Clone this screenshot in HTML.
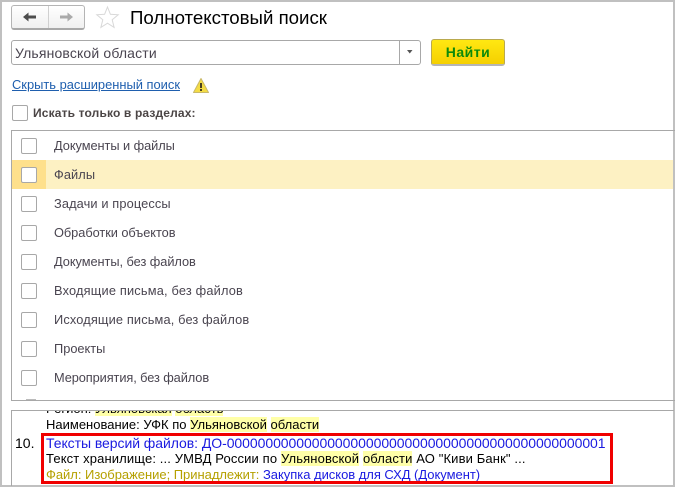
<!DOCTYPE html>
<html lang="ru"><head><meta charset="utf-8"><style>
html,body{margin:0;padding:0;background:#fff}
#p{position:relative;width:675px;height:487px;overflow:hidden;background:#fff;font-family:"Liberation Sans",sans-serif;font-size:12px;color:#4b4545}
#p div,#p span.a,#p svg{position:absolute}
.t{white-space:nowrap;line-height:16px;height:16px}
.cb{width:14px;height:14px;border:1px solid #a8a8a8;border-radius:2px;background:#fff}
.h{background:#ffffa8}
.r{left:54px;color:#4a4550;font-size:12.8px}
.l{color:#000;white-space:nowrap;line-height:16px;height:16px;overflow:visible;font-size:13px}
</style></head><body><div id="p">
<div style="left:0;top:0;width:675px;height:2px;background:#c0c0c0"></div>
<div style="left:0;top:0;width:2px;height:487px;background:#c0c0c0"></div>
<div style="left:673px;top:0;width:2px;height:487px;background:#c0c0c0"></div>
<div style="left:0;top:485px;width:675px;height:2px;background:#c0c0c0"></div>

<div style="left:11px;top:5px;width:72px;height:22px;border:1px solid #b4b4b4;border-bottom:2px solid #a8a8a8;border-radius:3px;background:linear-gradient(#fff,#f0f0f0)"></div>
<div style="left:48px;top:6px;width:1px;height:22px;background:#d0d0d0"></div>
<svg style="left:22px;top:11px" width="16" height="12" viewBox="0 0 16 12"><path d="M1 6 L6.500 1.500 V4.500 H14 V7.500 H6.500 V10.500Z" fill="#4d4d4d"/></svg>
<svg style="left:58px;top:11px" width="16" height="12" viewBox="0 0 16 12"><path d="M15 6 L9.500 1.500 V4.500 H2 V7.500 H9.500 V10.500Z" fill="#aaa"/></svg>
<svg style="left:95px;top:5px" width="25" height="24" viewBox="0 0 25 24"><path d="M12.500 2 L15.400 9.300 L23.200 9.800 L17.200 14.800 L19.100 22.400 L12.500 18.200 L5.900 22.400 L7.800 14.800 L1.800 9.800 L9.600 9.300Z" fill="#fff" stroke="#d8d8d8" stroke-width="1"/></svg>
<div class="t" style="left:130px;top:7px;height:22px;line-height:22px;font-size:18.67px;color:#000">Полнотекстовый поиск</div>

<div style="left:11px;top:40px;width:408px;height:23px;border:1px solid #a8a8a8;border-radius:3px;background:#fff"></div>
<div style="left:399px;top:41px;width:1px;height:23px;background:#a8a8a8"></div>
<svg style="left:406px;top:49px" width="8" height="6" viewBox="0 0 8 6"><path d="M1 1 H6.500 L3.750 4.500Z" fill="#555"/></svg>
<div class="t" style="left:15px;top:45px;font-size:14px;color:#4a4550;letter-spacing:.15px">Ульяновской области</div>

<div style="left:431px;top:39px;width:72px;height:24px;border:1px solid #b9a94e;border-bottom:2px solid #b5b5b5;border-radius:3px;background:linear-gradient(#ffe812,#f5d000)"></div>
<div class="t" style="left:431px;top:44px;width:74px;text-align:center;font-size:14px;font-weight:bold;color:#0b8a0b;letter-spacing:.5px">Найти</div>

<div class="t" style="left:12px;top:77px;font-size:12.9px;color:#1f5fae;text-decoration:underline">Скрыть расширенный поиск</div>
<svg style="left:193px;top:78px" width="16" height="15" viewBox="0 0 16 15"><path d="M8 .5 L15.500 14.500 H.5Z" fill="#f4dc45" stroke="#c9b96a" stroke-width="1" stroke-linejoin="round"/><rect x="7" y="5" width="2" height="5" fill="#4a4020"/><rect x="7" y="11" width="2" height="2" fill="#4a4020"/></svg>

<div class="cb" style="left:12px;top:105px"></div>
<div class="t" style="left:33px;top:105px;font-size:12px;font-weight:bold;color:#4b4545;letter-spacing:.15px">Искать только в разделах:</div>

<div style="left:11px;top:130px;width:664px;height:269px;border-top:1px solid #a8a8a8;border-left:1px solid #a8a8a8;border-bottom:1px solid #a8a8a8;box-sizing:content-box"></div>
<div style="left:12px;top:160px;width:661px;height:29px;background:#fdf1c3"></div>
<div style="left:12px;top:160px;width:34px;height:29px;background:#fee08c"></div>

<div class="cb" style="left:21px;top:138px"></div><div class="t r" style="top:138px;letter-spacing:-.05px">Документы и файлы</div>
<div class="cb" style="left:21px;top:167px"></div><div class="t r" style="top:167px;letter-spacing:.1px">Файлы</div>
<div class="cb" style="left:21px;top:196px"></div><div class="t r" style="top:196px;letter-spacing:.12px">Задачи и процессы</div>
<div class="cb" style="left:21px;top:225px"></div><div class="t r" style="top:225px;letter-spacing:-.05px">Обработки объектов</div>
<div class="cb" style="left:21px;top:254px"></div><div class="t r" style="top:254px;letter-spacing:-.05px">Документы, без файлов</div>
<div class="cb" style="left:21px;top:283px"></div><div class="t r" style="top:283px;letter-spacing:.18px">Входящие письма, без файлов</div>
<div class="cb" style="left:21px;top:312px"></div><div class="t r" style="top:312px;letter-spacing:.14px">Исходящие письма, без файлов</div>
<div class="cb" style="left:21px;top:341px"></div><div class="t r" style="top:341px">Проекты</div>
<div class="cb" style="left:21px;top:370px"></div><div class="t r" style="top:370px;letter-spacing:-.09px">Мероприятия, без файлов</div>
<div style="left:26px;top:399px;width:10px;height:1px;background:#bbb"></div>

<div style="left:11px;top:410px;width:662px;height:75px;border-top:1px solid #a8a8a8;border-left:1px solid #a8a8a8"></div>
<div style="left:12px;top:411px;width:661px;height:74px;overflow:hidden">
<div class="l" style="left:34px;top:-10px;color:#000">Регион: <span class="h">Ульяновская</span> <span class="h">область</span></div>
<div class="l" style="left:34px;top:6px">Наименование: УФК по <span class="h">Ульяновской</span> <span class="h">области</span></div>
<div class="l" style="left:3px;top:24px;font-size:14px">10.</div>
<div class="l" style="left:34px;top:24px;font-size:14px;color:#1a1ae0;letter-spacing:-.055px">Тексты версий файлов: ДО-0000000000000000000000000000000000000000000000001</div>
<div class="l" style="left:34px;top:40px;letter-spacing:.13px">Текст хранилище: ... УМВД России по <span class="h">Ульяновской</span> <span class="h">области</span> АО "Киви Банк" ...</div>
<div class="l" style="left:34px;top:56px;color:#b5a000;letter-spacing:-.03px">Файл: Изображение; Принадлежит: <span style="color:#1a1ae0">Закупка дисков для СХД (Документ)</span></div>
</div>
<div style="left:41px;top:433px;width:566px;height:45px;border:3px solid #f00000"></div>
</div></body></html>
